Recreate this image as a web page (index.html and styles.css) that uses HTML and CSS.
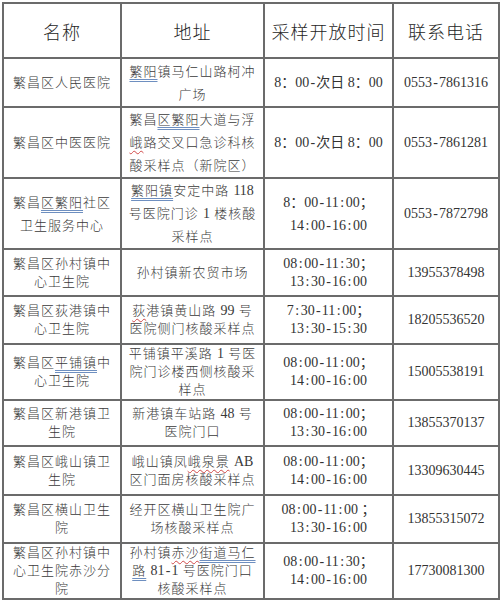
FILE: index.html
```html
<!DOCTYPE html>
<html lang="zh-CN">
<head>
<meta charset="utf-8">
<title>采样点</title>
<link rel="stylesheet" href="styles.css">
</head>
<body>
<div class="wrap">
<table class="grid">
  <colgroup>
    <col class="c1"><col class="c2"><col class="c3"><col class="c4">
  </colgroup>
  <thead>
    <tr class="head">
      <th>名称</th><th>地址</th><th>采样开放时间</th><th>联系电话</th>
    </tr>
  </thead>
  <tbody>
    <tr class="r1 tall">
      <td>繁昌区人民医院</td>
      <td><span class="blu">繁阳</span>镇马仁山路柯冲<br>广场</td>
      <td class="num">8：00<i class="w">-</i>次日 8：00</td>
      <td class="num">0553<i class="w">-</i>7861316</td>
    </tr>
    <tr class="r2 tall">
      <td>繁昌区中医医院</td>
      <td>繁昌<span class="blu">区繁阳</span>大道与浮<br><span class="red">峨</span>路交叉口急诊科核<br>酸采样点（新院区）</td>
      <td class="num">8：00<i class="w">-</i>次日 8：00</td>
      <td class="num">0553<i class="w">-</i>7861281</td>
    </tr>
    <tr class="r3 tall">
      <td>繁昌<span class="blu">区繁阳</span>社区<br>卫生服务中心</td>
      <td><span class="blu">繁阳镇</span>安定中路 <span class="d">118</span><br>号医院门诊 <span class="d">1</span> 楼核酸<br>采样点</td>
      <td class="num">8：00<i class="w">-</i>11<i class="w">:</i>00；<br>14<i class="w">:</i>00<i class="w">-</i>16<i class="w">:</i>00</td>
      <td class="num">0553<i class="w">-</i>7872798</td>
    </tr>
    <tr class="r4">
      <td>繁昌区孙村镇中<br>心卫生院</td>
      <td>孙村镇新农贸市场</td>
      <td class="num">08<i class="w">:</i>00<i class="w">-</i>11<i class="w">:</i>30；<br>13<i class="w">:</i>30<i class="w">-</i>16<i class="w">:</i>00</td>
      <td class="num">13955378498</td>
    </tr>
    <tr class="r5">
      <td>繁昌区荻港镇中<br>心卫生院</td>
      <td><span class="red">荻</span>港镇黄山路 <span class="d">99</span> 号<br>医院侧门核酸采样点</td>
      <td class="num">7<i class="w">:</i>30<i class="w">-</i>11<i class="w">:</i>00；<br>13<i class="w">:</i>30<i class="w">-</i>15<i class="w">:</i>30</td>
      <td class="num">18205536520</td>
    </tr>
    <tr class="r6">
      <td>繁昌区<span class="blu">平铺镇</span>中<br>心卫生院</td>
      <td>平铺镇平溪路 <span class="d">1</span> 号医<br>院门诊楼西侧核酸采<br>样点</td>
      <td class="num">08<i class="w">:</i>00<i class="w">-</i>11<i class="w">:</i>00；<br>14<i class="w">:</i>00<i class="w">-</i>16<i class="w">:</i>00</td>
      <td class="num">15005538191</td>
    </tr>
    <tr class="r7">
      <td>繁昌区新港镇卫<br>生院</td>
      <td>新港镇车站路 <span class="d">48</span> 号<br>医院门口</td>
      <td class="num">08<i class="w">:</i>00<i class="w">-</i>11<i class="w">:</i>00；<br>13<i class="w">:</i>30<i class="w">-</i>16<i class="w">:</i>00</td>
      <td class="num">13855370137</td>
    </tr>
    <tr class="r8">
      <td>繁昌区峨山镇卫<br>生院</td>
      <td>峨山镇凤<span class="red">峨泉景</span> <span class="d">AB</span><br>区门面房核酸采样点</td>
      <td class="num">08<i class="w">:</i>00<i class="w">-</i>11<i class="w">:</i>00；<br>14<i class="w">:</i>00<i class="w">-</i>16<i class="w">:</i>00</td>
      <td class="num">13309630445</td>
    </tr>
    <tr class="r9">
      <td>繁昌区横山卫生<br>院</td>
      <td>经开区横山卫生院广<br>场核酸采样点</td>
      <td class="num">08<i class="w">:</i>00<i class="w">-</i>11<i class="w">:</i>00 ；<br>13<i class="w">:</i>30<i class="w">-</i>16<i class="w">:</i>00</td>
      <td class="num">13855315072</td>
    </tr>
    <tr class="r10">
      <td>繁昌区孙村镇中<br>心卫生院赤沙分<br>院</td>
      <td>孙村镇<span class="red">赤沙</span><span class="blu">街道马仁</span><br><span class="blu">路</span> <span class="d">81<i class="w">-</i>1</span> 号医院门口<br>核酸采样点</td>
      <td class="num">08<i class="w">:</i>00<i class="w">-</i>11<i class="w">:</i>30；<br>14<i class="w">:</i>00<i class="w">-</i>16<i class="w">:</i>00</td>
      <td class="num">17730081300</td>
    </tr>
  </tbody>
</table>
</div>
</body>
</html>
```
FILE: styles.css
```css
html, body {
  margin: 0;
  padding: 0;
  background: #ffffff;
}

.wrap {
  padding: 2px 2px 0 2px;
}

.grid {
  border-collapse: collapse;
  table-layout: fixed;
  width: 496px;
  font-family: "Liberation Serif", "Noto Sans CJK SC", serif;
  color: #3a3a3a;
}

.c1 { width: 118px; }
.c2 { width: 143px; }
.c3 { width: 129px; }
.c4 { width: 106px; }

.grid th,
.grid td {
  border: 2px solid #6b6b6b;
  text-align: center;
  vertical-align: middle;
  padding: 0 2px;
  white-space: nowrap;
  overflow: hidden;
}

.grid th {
  font-family: "Noto Sans CJK SC", serif;
  font-weight: 300;
  font-size: 18px;
  letter-spacing: 1px;
  color: #262626;
  line-height: 22px;
}

.grid td {
  font-size: 13px;
  letter-spacing: 1px;
  font-weight: 300;
  line-height: 18px;
}

.grid td.num {
  font-size: 14px;
  letter-spacing: 0;
  font-weight: 400;
  color: #333333;
}

.d {
  font-size: 14px;
  letter-spacing: 0;
  font-weight: 400;
}

.w {
  display: inline-block;
  width: 7px;
  text-align: center;
  font-style: normal;
  letter-spacing: 0;
}

.tall td { line-height: 23px; }

.head { height: 55px; }
.r1 { height: 49px; }
.r2 { height: 71px; }
.r3 { height: 71px; }
.r4 { height: 47px; }
.r5 { height: 48px; }
.r6 { height: 56px; }
.r7 { height: 46px; }
.r8 { height: 49px; }
.r9 { height: 48px; }
.r10 { height: 54px; }

.blu {
  text-decoration: underline double #6e8fc0;
  text-decoration-thickness: 1px;
  text-underline-offset: 3px;
}

.red {
  text-decoration: underline wavy #d04848;
  text-decoration-thickness: 1px;
  text-underline-offset: 3px;
}
```
